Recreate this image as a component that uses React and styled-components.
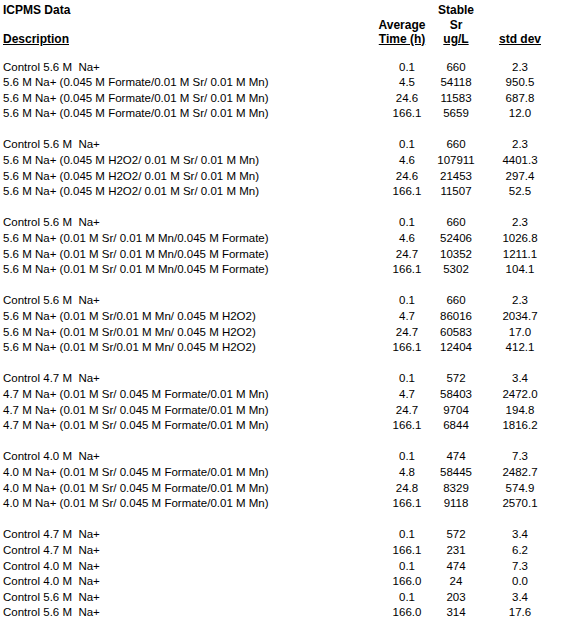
import React from 'react'
import styled, { createGlobalStyle } from 'styled-components'

const GlobalStyle = createGlobalStyle`
  html, body {
    margin: 0;
    padding: 0;
    background: #fff;
    overflow: hidden;
  }
  body {
    font-family: Arial, "Liberation Sans", sans-serif;
    color: #000;
  }
`

const Sheet = styled.div`
  width: 562px;
  padding: 3px 0 0 3px;
  font-size: 11.5px;
`

const Row = styled.div`
  display: grid;
  grid-template-columns: 374px 60px 38px 90px;
  height: ${p => p.h || 15.6}px;
  line-height: ${p => p.h || 15.6}px;
  white-space: pre;
  font-weight: ${p => (p.bold ? 700 : 400)};
  font-size: ${p => (p.bold ? '12px' : 'inherit')};
`

const Cell = styled.div`
  justify-self: ${p => (p.left ? 'start' : 'center')};
  margin-right: ${p => p.shift || 0}px;
  text-decoration: ${p => (p.u ? 'underline' : 'none')};
  text-underline-offset: 1px;
`

const Group = styled.div`
  margin-bottom: 15.6px;
`

const HeadGap = styled.div`
  height: 13px;
`

const formate1 = '5.6 M Na+ (0.045 M Formate/0.01 M Sr/ 0.01 M Mn)'
const h2o21 = '5.6 M Na+ (0.045 M H2O2/ 0.01 M Sr/ 0.01 M Mn)'
const formate2 = '5.6 M Na+ (0.01 M Sr/ 0.01 M Mn/0.045 M Formate)'
const h2o22 = '5.6 M Na+ (0.01 M Sr/0.01 M Mn/ 0.045 M H2O2)'
const na47 = '4.7 M Na+ (0.01 M Sr/ 0.045 M Formate/0.01 M Mn)'
const na40 = '4.0 M Na+ (0.01 M Sr/ 0.045 M Formate/0.01 M Mn)'

const groups = [
  [
    ['Control 5.6 M  Na+', '0.1', '660', '2.3'],
    [formate1, '4.5', '54118', '950.5'],
    [formate1, '24.6', '11583', '687.8'],
    [formate1, '166.1', '5659', '12.0'],
  ],
  [
    ['Control 5.6 M  Na+', '0.1', '660', '2.3'],
    [h2o21, '4.6', '107911', '4401.3'],
    [h2o21, '24.6', '21453', '297.4'],
    [h2o21, '166.1', '11507', '52.5'],
  ],
  [
    ['Control 5.6 M  Na+', '0.1', '660', '2.3'],
    [formate2, '4.6', '52406', '1026.8'],
    [formate2, '24.7', '10352', '1211.1'],
    [formate2, '166.1', '5302', '104.1'],
  ],
  [
    ['Control 5.6 M  Na+', '0.1', '660', '2.3'],
    [h2o22, '4.7', '86016', '2034.7'],
    [h2o22, '24.7', '60583', '17.0'],
    [h2o22, '166.1', '12404', '412.1'],
  ],
  [
    ['Control 4.7 M  Na+', '0.1', '572', '3.4'],
    [na47, '4.7', '58403', '2472.0'],
    [na47, '24.7', '9704', '194.8'],
    [na47, '166.1', '6844', '1816.2'],
  ],
  [
    ['Control 4.0 M  Na+', '0.1', '474', '7.3'],
    [na40, '4.8', '58445', '2482.7'],
    [na40, '24.8', '8329', '574.9'],
    [na40, '166.1', '9118', '2570.1'],
  ],
  [
    ['Control 4.7 M  Na+', '0.1', '572', '3.4'],
    ['Control 4.7 M  Na+', '166.1', '231', '6.2'],
    ['Control 4.0 M  Na+', '0.1', '474', '7.3'],
    ['Control 4.0 M  Na+', '166.0', '24', '0.0'],
    ['Control 5.6 M  Na+', '0.1', '203', '3.4'],
    ['Control 5.6 M  Na+', '166.0', '314', '17.6'],
  ],
]

export default function App() {
  return (
    <>
      <GlobalStyle />
      <Sheet>
        <Row bold h={14.5}>
          <Cell left>ICPMS Data</Cell>
          <Cell />
          <Cell>Stable</Cell>
          <Cell />
        </Row>
        <Row bold h={14.5}>
          <Cell left />
          <Cell shift={10}>Average</Cell>
          <Cell>Sr</Cell>
          <Cell />
        </Row>
        <Row bold h={14.5}>
          <Cell left u>Description</Cell>
          <Cell u shift={10}>Time (h)</Cell>
          <Cell u>ug/L</Cell>
          <Cell u>std dev</Cell>
        </Row>
        <HeadGap />
        {groups.map((g, gi) => (
          <Group key={gi}>
            {g.map((r, ri) => (
              <Row key={ri}>
                <Cell left>{r[0]}</Cell>
                <Cell>{r[1]}</Cell>
                <Cell>{r[2]}</Cell>
                <Cell>{r[3]}</Cell>
              </Row>
            ))}
          </Group>
        ))}
      </Sheet>
    </>
  )
}
